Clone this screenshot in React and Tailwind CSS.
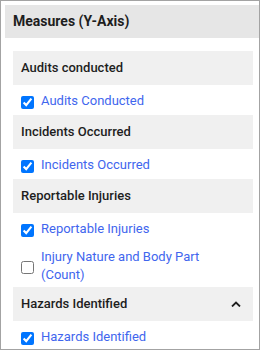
import React from 'react'

const sections = [
  { title: 'Audits conducted', items: [{ label: 'Audits Conducted', checked: true }] },
  { title: 'Incidents Occurred', items: [{ label: 'Incidents Occurred', checked: true }] },
  {
    title: 'Reportable Injuries',
    items: [
      { label: 'Reportable Injuries', checked: true },
      { label: 'Injury Nature and Body Part (Count)', checked: false },
    ],
  },
  { title: 'Hazards Identified', open: true, items: [{ label: 'Hazards Identified', checked: true }] },
]

function ChevronUp() {
  return (
    <svg width="10" height="6" viewBox="0 0 10 6" fill="none">
      <polyline points="1,5.5 5,1.5 9,5.5" stroke="#1f1f1f" strokeWidth="1.8" />
    </svg>
  )
}

export default function App() {
  return (
    <div className="w-[260px] h-[350px] border border-[#a3a3a3] bg-white overflow-hidden font-['Roboto',sans-serif]">
      <div className="pt-[4px] pl-[4px]">
        <div className="h-[33px] bg-[#e6e6e6] flex items-center pl-2 text-[14px] font-bold text-[#1e1e1e]">
          Measures (Y-Axis)
        </div>

        {/* measure groups */}
        <div className="pl-2 pr-[6px] pt-[13px]">
          {sections.map(sec => (
            <div key={sec.title}>
              <div className="h-[34px] bg-[#f0f0f0] flex items-center justify-between pl-2 pr-3 text-[13px] font-medium text-[#1e1e1e]">
                <span>{sec.title}</span>
                {sec.open && <ChevronUp />}
              </div>
              {sec.items.map(item => (
                <label
                  key={item.label}
                  className="flex items-center gap-[7px] min-h-[30px] pt-[5px] pb-[3px] pl-2 pr-6"
                >
                  <input
                    type="checkbox"
                    defaultChecked={item.checked}
                    className="w-[13px] h-[13px] mt-[3px] shrink-0"
                  />
                  <span className="text-[13px] leading-[18px] text-[#3f66ee]">{item.label}</span>
                </label>
              ))}
            </div>
          ))}
        </div>
      </div>
    </div>
  )
}
